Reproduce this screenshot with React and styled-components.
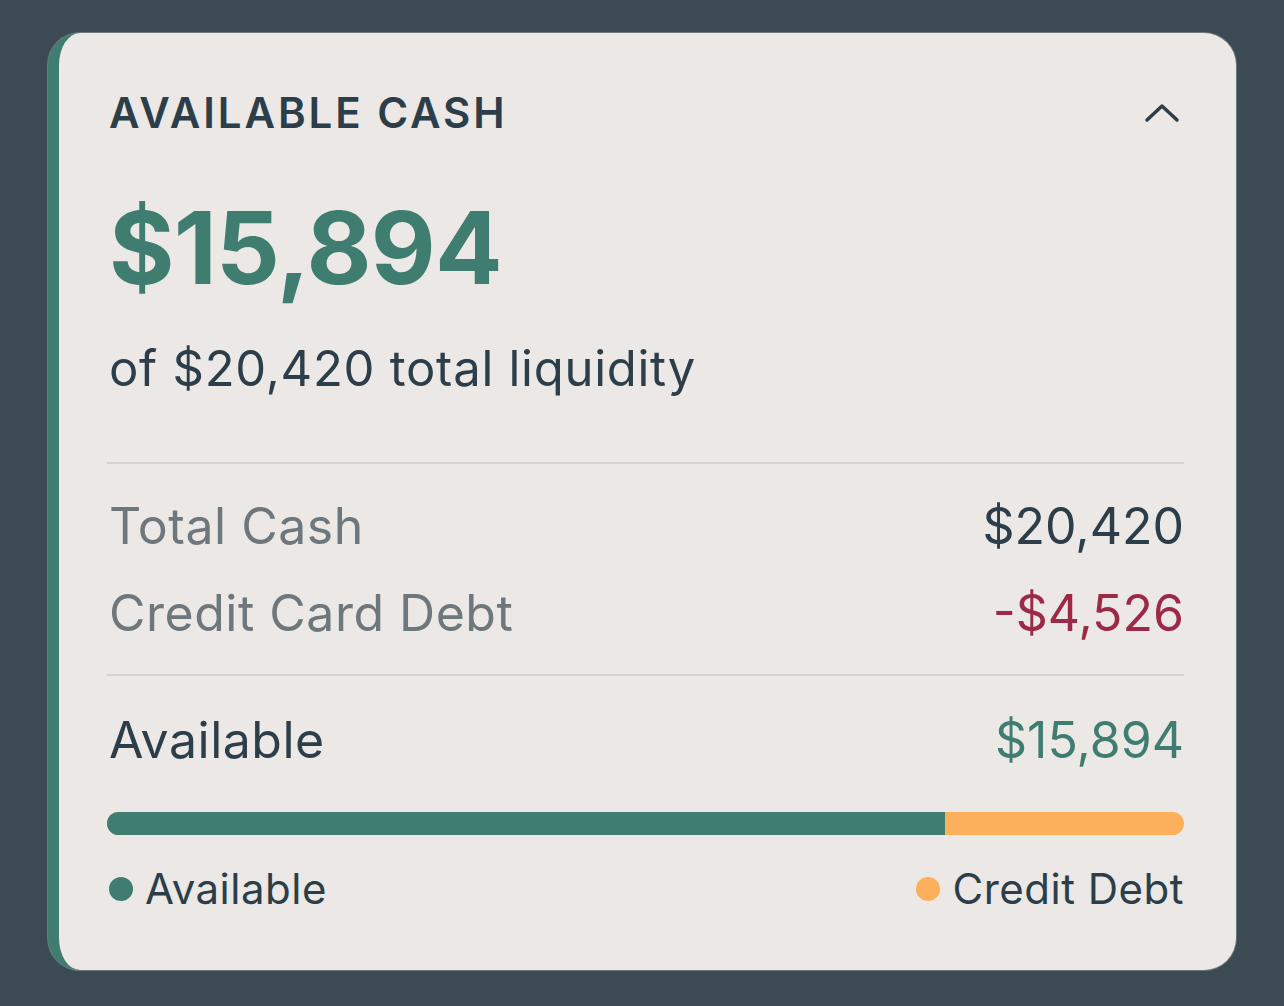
import React from "react";
import styled, { createGlobalStyle } from "styled-components";

const Global = createGlobalStyle`
  html, body { margin: 0; padding: 0; background: #3c4a53; }
  body { font-family: Inter, "Noto Sans", "Liberation Sans", sans-serif; }
  * { box-sizing: border-box; }
`;

const Page = styled.div`
  width: 1284px;
  height: 1006px;
  padding: 33px 48px 36px 48px;
  display: flex;
`;

const Card = styled.section`
  flex: 1;
  background: #ebe8e5;
  border-radius: 32px;
  border-left: 11px solid #3f7d71;
  box-shadow: 0 0 0 1px rgba(255, 255, 255, 0.25);
  padding: 52px 52px 0 50px;
  display: flex;
  flex-direction: column;
`;

const Header = styled.div`
  display: flex;
  justify-content: space-between;
  align-items: center;
  height: 56px;
`;

const Title = styled.h2`
  margin: 0;
  font-size: 42px;
  line-height: 56px;
  font-weight: 600;
  letter-spacing: 0.07em;
  color: #2c3e4a;
`;

const Chevron = styled.svg`
  width: 36px;
  height: 22px;
  margin-right: 4px;
`;

const Big = styled.div`
  margin-top: 50px;
  font-size: 100px;
  line-height: 114px;
  font-weight: 700;
  color: #3f7d71;
  letter-spacing: -0.008em;
`;

const Sub = styled.div`
  margin-top: 35px;
  font-size: 49px;
  line-height: 58px;
  letter-spacing: 0.015em;
  color: #2c3e4a;
`;

const Divider = styled.hr`
  margin: ${(p) => p.$mt}px 0 0 -2px;
  border: none;
  height: 2px;
  background: #d6d2ce;
`;

const Row = styled.div`
  display: flex;
  justify-content: space-between;
  margin-top: ${(p) => p.$mt}px;
  font-size: 50px;
  line-height: 58px;
`;

const Label = styled.span`
  letter-spacing: 0.01em;
  color: ${(p) => (p.$strong ? "#2c3e4a" : "#6e777c")};
`;

const Value = styled.span`
  color: ${(p) => p.$color};
`;

const Bar = styled.div`
  margin-top: 43px;
  height: 23px;
  border-radius: 12px;
  overflow: hidden;
  display: flex;
  background: #fcb05c;
  margin-left: -2px;
`;

const Segment = styled.div`
  background: ${(p) => p.$color};
  height: 100%;
`;

const Legend = styled.div`
  margin-top: 30px;
  display: flex;
  justify-content: space-between;
  font-size: 42px;
  line-height: 48px;
  letter-spacing: 0.012em;
  color: #2c3e4a;
`;

const LegendItem = styled.span`
  display: flex;
  align-items: center;
  gap: 12px;
`;

const Dot = styled.span`
  width: 24px;
  height: 24px;
  border-radius: 50%;
  background: ${(p) => p.$color};
`;

export default function App() {
  const available = 15894;
  const debt = 4526;
  const pct = (available / (available + debt)) * 100;
  return (
    <Page>
      <Global />
      <Card>
        <Header>
          <Title>AVAILABLE CASH</Title>
          <Chevron viewBox="0 0 36 22" fill="none">
            <path d="M3 18 L18 4 L33 18" stroke="#2c3e4a" strokeWidth="3.5" strokeLinecap="round" strokeLinejoin="round" />
          </Chevron>
        </Header>
        <Big>$15,894</Big>
        <Sub>of $20,420 total liquidity</Sub>
        <Divider $mt={64} />
        <Row $mt={33}>
          <Label>Total Cash</Label>
          <Value $color="#2c3e4a">$20,420</Value>
        </Row>
        <Row $mt={29}>
          <Label>Credit Card Debt</Label>
          <Value $color="#9c2a47">-$4,526</Value>
        </Row>
        <Divider $mt={32} />
        <Row $mt={35}>
          <Label $strong>Available</Label>
          <Value $color="#3f7d71">$15,894</Value>
        </Row>
        <Bar>
          <Segment $color="#3f7d71" style={{ width: `${pct}%` }} />
        </Bar>
        <Legend>
          <LegendItem>
            <Dot $color="#3f7d71" />
            Available
          </LegendItem>
          <LegendItem>
            <Dot $color="#fcb05c" />
            Credit Debt
          </LegendItem>
        </Legend>
      </Card>
    </Page>
  );
}
